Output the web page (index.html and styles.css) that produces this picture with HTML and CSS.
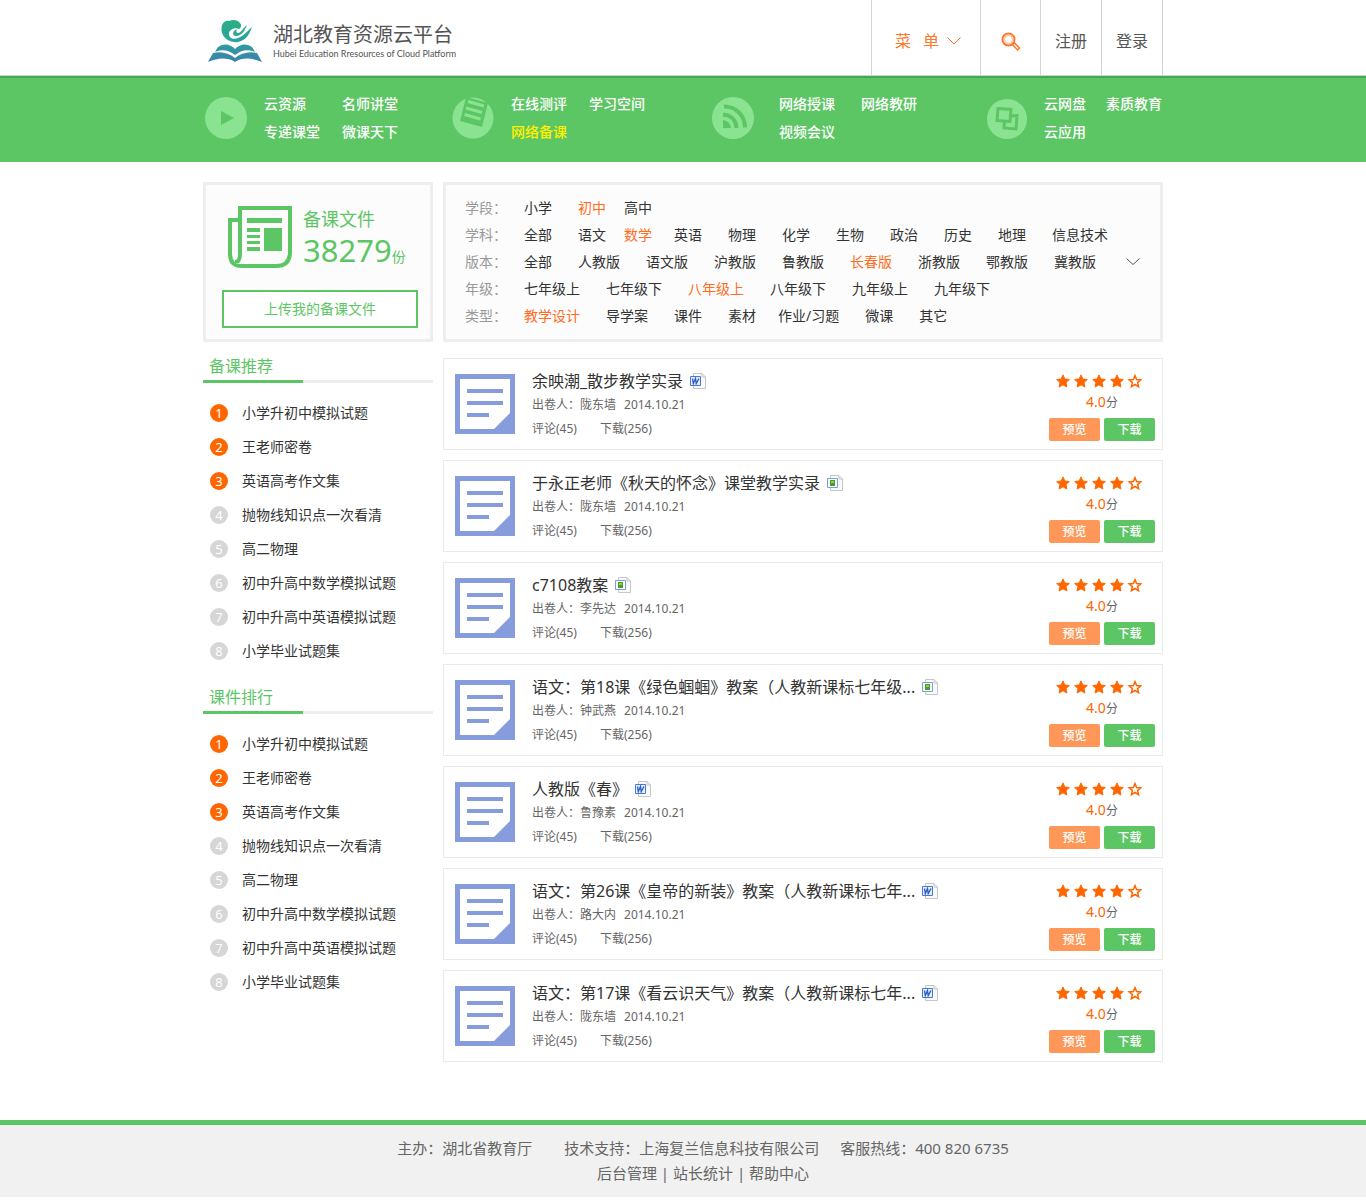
FILE: index.html
```html
<!DOCTYPE html>
<html lang="zh-CN">
<head>
<meta charset="utf-8">
<meta name="viewport" content="width=device-width, initial-scale=1">
<title>湖北教育资源云平台</title>
<link rel="stylesheet" href="styles.css">
</head>
<body>
<svg class="sprite" aria-hidden="true">
  <defs>
    <linearGradient id="logo-fill" x1="0" y1="0" x2="0" y2="44" gradientUnits="userSpaceOnUse">
      <stop offset="0" stop-color="#2bb183"/><stop offset=".5" stop-color="#2ba39b"/><stop offset="1" stop-color="#3f7fae"/>
    </linearGradient>
    <symbol id="doc" viewBox="0 0 60 60">
      <path fill="#869cdc" d="M0 0h60v60H0z"/>
      <path fill="#fff" d="M5 5h50v34L39 55H5z"/>
      <path fill="#869cdc" d="M12 15h36v4H12zM12 27h36v4H12zM12 39h22v4H12z"/>
    </symbol>
    <symbol id="word" viewBox="0 0 16 16">
      <path d="M3.500.5h8.500l3.500 3.500v11.500h-12z" fill="#fafafa" stroke="#c3c6cb"/>
      <path d="M12 .5V4h3.500" fill="none" stroke="#c3c6cb"/>
      <path d="M.5 3.500h10v9H.5z" fill="#e8f0fc" stroke="#4a78d8"/>
      <path d="M2.500 5.500l.8 5 2.200-5 .7 5 2.800-5" fill="none" stroke="#2f5fc4" stroke-width="1.400"/>
    </symbol>
    <symbol id="image" viewBox="0 0 16 16">
      <path d="M3.500.5h8.500l3.500 3.500v11.500h-12z" fill="#fafafa" stroke="#c3c6cb"/>
      <path d="M12 .5V4h3.500" fill="none" stroke="#c3c6cb"/>
      <path d="M.5 3.500h10v9H.5z" fill="#fff" stroke="#7d9fd4"/>
      <path d="M3 5h5v6H3z" fill="#4d9c2c"/><path d="M4 6h3v2H4z" fill="#8fcf50"/>
    </symbol>
    <symbol id="stars" viewBox="0 0 86 14">
      <g fill="#ff6600" stroke="#ff6600">
        <path id="star" stroke-width="1" stroke-linejoin="round" d="M7 .9l1.800 4.100 4.500.5-3.300 3 .9 4.500L7 10.800 3.100 13 4 8.500.7 5.500 5.200 5z"/>
        <use href="#star" x="18"/><use href="#star" x="36"/><use href="#star" x="54"/>
      </g>
      <path fill="none" stroke="#ff6600" stroke-width="1.500" d="M79 1.600l1.600 3.900 4.200.4-3.200 2.700 1 4.100L79 10.500l-3.600 2.200 1-4.100-3.200-2.700 4.200-.4z"/>
    </symbol>
  </defs>
</svg>

<header class="top">
  <div class="wrap top-row">
    <a class="logo" href="#">
      <svg width="54" height="44" viewBox="0 0 54 44" aria-hidden="true">
        <g fill="url(#logo-fill)">
          <path d="M22 22C16 20 13 14 13.500 9 14 4 17 1 21 2c4-2 9-1 11 2 2 2 1 5-1 6-5-2-10 1-10 5 0 4 4 6 9 4 6-2 9-7 14-11-2 6-5 13-14 15-3 .5-6 0-8-1z"/>
          <path d="M29 10c-5 2-5 7-1 7 6 0 9-6 11-11-4 3-6 8-9 8-2 0-2-2-1-4z"/>
          <path d="M10 28c6-4 12-3 17 2 5-5 11-6 17-2l3 5c-7-3-14-2-20 3-6-5-13-6-20-3z"/>
          <path d="M5 34l-5 9c10-4 19-5 27 0 8-5 17-4 27 0l-5-9c-8-2-16 0-22 5-6-5-14-7-22-5z"/>
        </g>
      </svg>
      <span class="logo-text">
        <strong>湖北教育资源云平台</strong>
        <small>Hubei Education Rresources of Cloud Platform</small>
      </span>
    </a>
    <div class="tools">
      <button class="tool menu" type="button"><span>菜&nbsp;&ensp;单</span>
        <svg width="14" height="8" viewBox="0 0 14 8" aria-hidden="true"><path d="M.5 .5L7 7l6.500-6.500" fill="none" stroke="currentColor"/></svg>
      </button>
      <button class="tool search" type="button" aria-label="搜索">
        <svg width="20" height="20" viewBox="0 0 20 20" aria-hidden="true" fill="none" stroke="currentColor"><circle cx="7.500" cy="7.500" r="6" stroke-width="2"/><circle cx="7.500" cy="7.500" r="4" stroke-width=".5"/><path d="M11.500 12.500l5 5.500 2-2-5-5z" stroke-width="1.500"/></svg>
      </button>
      <a class="tool" href="#">注册</a>
      <a class="tool" href="#">登录</a>
    </div>
  </div>
</header>

<nav class="nav">
  <div class="wrap nav-row">
    <div class="group">
      <svg width="42" height="42" viewBox="0 0 42 42" aria-hidden="true"><circle cx="21" cy="21" r="21" fill="#8ae391"/><path d="M16 14l13 7-13 7z" fill="#5dc664"/></svg>
      <div class="links"><a href="#">云资源</a><a href="#">名师讲堂</a><a href="#">专递课堂</a><a href="#">微课天下</a></div>
    </div>
    <div class="group">
      <svg width="42" height="42" viewBox="0 0 42 42" aria-hidden="true"><circle cx="21" cy="21" r="20.500" fill="#8ae391"/><path d="M14 0l22 6-6 24-22-6z" fill="#5dc664"/><path d="M16 4.500l16 4.500M14 11l16 4.500M12.500 17.500l16 4.500" stroke="#8ae391" stroke-width="3"/></svg>
      <div class="links"><a href="#">在线测评</a><a href="#">学习空间</a><a class="current" href="#">网络备课</a></div>
    </div>
    <div class="group broad">
      <svg width="42" height="42" viewBox="0 0 42 42" aria-hidden="true"><circle cx="21" cy="21" r="21" fill="#8ae391"/><path d="M11 23q7 1 8 8h-8z" fill="#5dc664"/><path d="M11 17.500C19 18 24 23 24.500 31M12 9.500c12 0 21 9 21 21" fill="none" stroke="#5dc664" stroke-width="4"/></svg>
      <div class="links"><a href="#">网络授课</a><a href="#">网络教研</a><a href="#">视频会议</a></div>
    </div>
    <div class="group">
      <svg width="40" height="42" viewBox="0 0 40 42" aria-hidden="true"><circle cx="20" cy="22" r="20" fill="#8ae391"/><g fill="none" stroke="#5dc664" stroke-width="3"><path d="M11 11.500l13 1-1 12-13-1z"/><path d="M22 19l8-.5-1 13.500-12-1 .5-7"/></g></svg>
      <div class="links"><a href="#">云网盘</a><a href="#">素质教育</a><a href="#">云应用</a></div>
    </div>
  </div>
</nav>

<main class="wrap page">
  <section class="upload">
    <div class="total">
      <svg width="64" height="62" viewBox="0 0 64 62" aria-hidden="true">
        <path d="M12 14H2v34q0 12 12 12h34q14 0 14-14V2H12v46q0 8-5 8" fill="none" stroke="#5dc664" stroke-width="4"/>
        <path d="M19 12h35v5H19zM19 22h13v4H19zM19 29h13v3H19zM19 35h13v3H19zM19 41h13v4H19zM36 22h18v23H36z" fill="#5dc664"/>
      </svg>
      <div>
        <div class="total-name">备课文件</div>
        <div class="total-count"><b>38279</b>份</div>
      </div>
    </div>
    <button class="upload-button" type="button">上传我的备课文件</button>
  </section>

  <section class="filters">
    <div class="filter"><span class="label">学段：</span><a href="#">小学</a><a class="on near" href="#">初中</a><a href="#">高中</a></div>
    <div class="filter"><span class="label">学科：</span><a href="#">全部</a><a class="near" href="#">语文</a><a class="on close" href="#">数学</a><a href="#">英语</a><a href="#">物理</a><a href="#">化学</a><a href="#">生物</a><a href="#">政治</a><a href="#">历史</a><a href="#">地理</a><a href="#">信息技术</a></div>
    <div class="filter"><span class="label">版本：</span><a href="#">全部</a><a href="#">人教版</a><a href="#">语文版</a><a href="#">沪教版</a><a href="#">鲁教版</a><a class="on" href="#">长春版</a><a href="#">浙教版</a><a href="#">鄂教版</a><a href="#">冀教版</a><button class="more" type="button" aria-label="更多版本"><svg width="14" height="8" viewBox="0 0 14 8" aria-hidden="true"><path d="M.5 .5L7 6.500 13.500.5" fill="none" stroke="#555"/></svg></button></div>
    <div class="filter"><span class="label">年级：</span><a href="#">七年级上</a><a href="#">七年级下</a><a class="on" href="#">八年级上</a><a href="#">八年级下</a><a href="#">九年级上</a><a href="#">九年级下</a></div>
    <div class="filter"><span class="label">类型：</span><a class="on" href="#">教学设计</a><a href="#">导学案</a><a href="#">课件</a><a class="close" href="#">素材</a><a href="#">作业/习题</a><a href="#">微课</a><a href="#">其它</a></div>
  </section>

  <aside class="side">
    <section class="rank">
      <h2>备课推荐</h2>
      <ol>
        <li><i>1</i><a href="#">小学升初中模拟试题</a></li>
        <li><i>2</i><a href="#">王老师密卷</a></li>
        <li><i>3</i><a href="#">英语高考作文集</a></li>
        <li><i>4</i><a href="#">抛物线知识点一次看清</a></li>
        <li><i>5</i><a href="#">高二物理</a></li>
        <li><i>6</i><a href="#">初中升高中数学模拟试题</a></li>
        <li><i>7</i><a href="#">初中升高中英语模拟试题</a></li>
        <li><i>8</i><a href="#">小学毕业试题集</a></li>
      </ol>
    </section>
    <section class="rank">
      <h2>课件排行</h2>
      <ol>
        <li><i>1</i><a href="#">小学升初中模拟试题</a></li>
        <li><i>2</i><a href="#">王老师密卷</a></li>
        <li><i>3</i><a href="#">英语高考作文集</a></li>
        <li><i>4</i><a href="#">抛物线知识点一次看清</a></li>
        <li><i>5</i><a href="#">高二物理</a></li>
        <li><i>6</i><a href="#">初中升高中数学模拟试题</a></li>
        <li><i>7</i><a href="#">初中升高中英语模拟试题</a></li>
        <li><i>8</i><a href="#">小学毕业试题集</a></li>
      </ol>
    </section>
  </aside>

  <section class="papers">
    <article class="paper">
      <svg class="doc" aria-hidden="true"><use href="#doc"/></svg>
      <div class="info">
        <h3><a href="#">余映潮_散步教学实录</a><svg class="type" aria-hidden="true"><use href="#word"/></svg></h3>
        <p><span>出卷人：陇东墙</span><time>2014.10.21</time></p>
        <p class="counts"><span>评论(45)</span><span>下载(256)</span></p>
      </div>
      <div class="rate">
        <svg class="stars" role="img" aria-label="四星"><use href="#stars"/></svg>
        <div class="score"><b>4.0</b>分</div>
        <div class="actions"><button class="preview" type="button">预览</button><button class="download" type="button">下载</button></div>
      </div>
    </article>
    <article class="paper">
      <svg class="doc" aria-hidden="true"><use href="#doc"/></svg>
      <div class="info">
        <h3><a href="#">于永正老师《秋天的怀念》课堂教学实录</a><svg class="type" aria-hidden="true"><use href="#image"/></svg></h3>
        <p><span>出卷人：陇东墙</span><time>2014.10.21</time></p>
        <p class="counts"><span>评论(45)</span><span>下载(256)</span></p>
      </div>
      <div class="rate">
        <svg class="stars" role="img" aria-label="四星"><use href="#stars"/></svg>
        <div class="score"><b>4.0</b>分</div>
        <div class="actions"><button class="preview" type="button">预览</button><button class="download" type="button">下载</button></div>
      </div>
    </article>
    <article class="paper">
      <svg class="doc" aria-hidden="true"><use href="#doc"/></svg>
      <div class="info">
        <h3><a href="#">c7108教案</a><svg class="type" aria-hidden="true"><use href="#image"/></svg></h3>
        <p><span>出卷人：李先达</span><time>2014.10.21</time></p>
        <p class="counts"><span>评论(45)</span><span>下载(256)</span></p>
      </div>
      <div class="rate">
        <svg class="stars" role="img" aria-label="四星"><use href="#stars"/></svg>
        <div class="score"><b>4.0</b>分</div>
        <div class="actions"><button class="preview" type="button">预览</button><button class="download" type="button">下载</button></div>
      </div>
    </article>
    <article class="paper">
      <svg class="doc" aria-hidden="true"><use href="#doc"/></svg>
      <div class="info">
        <h3><a href="#">语文：第18课《绿色蝈蝈》教案（人教新课标七年级...</a><svg class="type" aria-hidden="true"><use href="#image"/></svg></h3>
        <p><span>出卷人：钟武燕</span><time>2014.10.21</time></p>
        <p class="counts"><span>评论(45)</span><span>下载(256)</span></p>
      </div>
      <div class="rate">
        <svg class="stars" role="img" aria-label="四星"><use href="#stars"/></svg>
        <div class="score"><b>4.0</b>分</div>
        <div class="actions"><button class="preview" type="button">预览</button><button class="download" type="button">下载</button></div>
      </div>
    </article>
    <article class="paper">
      <svg class="doc" aria-hidden="true"><use href="#doc"/></svg>
      <div class="info">
        <h3><a href="#">人教版《春》</a><svg class="type" aria-hidden="true"><use href="#word"/></svg></h3>
        <p><span>出卷人：鲁豫素</span><time>2014.10.21</time></p>
        <p class="counts"><span>评论(45)</span><span>下载(256)</span></p>
      </div>
      <div class="rate">
        <svg class="stars" role="img" aria-label="四星"><use href="#stars"/></svg>
        <div class="score"><b>4.0</b>分</div>
        <div class="actions"><button class="preview" type="button">预览</button><button class="download" type="button">下载</button></div>
      </div>
    </article>
    <article class="paper">
      <svg class="doc" aria-hidden="true"><use href="#doc"/></svg>
      <div class="info">
        <h3><a href="#">语文：第26课《皇帝的新装》教案（人教新课标七年...</a><svg class="type" aria-hidden="true"><use href="#word"/></svg></h3>
        <p><span>出卷人：路大内</span><time>2014.10.21</time></p>
        <p class="counts"><span>评论(45)</span><span>下载(256)</span></p>
      </div>
      <div class="rate">
        <svg class="stars" role="img" aria-label="四星"><use href="#stars"/></svg>
        <div class="score"><b>4.0</b>分</div>
        <div class="actions"><button class="preview" type="button">预览</button><button class="download" type="button">下载</button></div>
      </div>
    </article>
    <article class="paper">
      <svg class="doc" aria-hidden="true"><use href="#doc"/></svg>
      <div class="info">
        <h3><a href="#">语文：第17课《看云识天气》教案（人教新课标七年...</a><svg class="type" aria-hidden="true"><use href="#word"/></svg></h3>
        <p><span>出卷人：陇东墙</span><time>2014.10.21</time></p>
        <p class="counts"><span>评论(45)</span><span>下载(256)</span></p>
      </div>
      <div class="rate">
        <svg class="stars" role="img" aria-label="四星"><use href="#stars"/></svg>
        <div class="score"><b>4.0</b>分</div>
        <div class="actions"><button class="preview" type="button">预览</button><button class="download" type="button">下载</button></div>
      </div>
    </article>
  </section>
</main>

<footer class="footer">
  <div class="owners"><span>主办：湖北省教育厅</span><span class="support">技术支持：上海复兰信息科技有限公司</span><span>客服热线：400 820 6735</span></div>
  <div><a href="#">后台管理</a> | <a href="#">站长统计</a> | <a href="#">帮助中心</a></div>
</footer>
</body>
</html>
```
FILE: styles.css
```css
* { box-sizing: border-box; }

body {
  margin: 0;
  background: #fff;
  color: #333;
  font: 14px/24px "Noto Sans", "Noto Sans CJK SC", sans-serif;
}

a { color: inherit; text-decoration: none; }
button { font: inherit; margin: 0; padding: 0; border: 0; background: none; cursor: pointer; }
h2, h3, p, ol { margin: 0; padding: 0; font-weight: 400; }
b, strong, i { font-weight: 400; font-style: normal; }
svg { display: block; flex: none; }
.sprite { position: absolute; width: 0; height: 0; }
.wrap { max-width: 960px; margin: 0 auto; }

/* Header */
.top { border-bottom: 1px solid #c9d3c9; }
.top-row { display: flex; justify-content: space-between; height: 75px; }
.logo { display: flex; align-items: center; gap: 11px; padding: 6px 0 0 5px; }
.logo-text { display: flex; flex-direction: column; padding-top: 2px; color: #555; }
.logo-text strong { font-size: 20px; line-height: 24px; }
.logo-text small { font: 9px/14px Lato, sans-serif; }
.tools { display: flex; border-right: 1px solid #d4d4d4; }
.tool {
  display: flex;
  align-items: center;
  justify-content: center;
  width: 61px;
  padding-top: 7px;
  border-left: 1px solid #d4d4d4;
  color: #555;
  font-size: 16px;
}
.menu { width: 109px; gap: 8px; padding-left: 4px; color: #ff7728; }
.search { width: 60px; padding-top: 9px; color: #ff7728; }

/* Green navigation */
.nav { border-top: 2px solid #43a957; background: #5dc664; color: #fff; }
.nav-row { display: grid; grid-template-columns: 247fr 260fr 275fr 176fr; padding: 12px 0 16px 2px; }
.group { display: flex; align-items: center; gap: 17px; }
.links { display: grid; grid-template-columns: auto auto; column-gap: 22px; line-height: 28px; white-space: nowrap; font-weight: 500; }
.broad { gap: 25px; }
.broad .links { column-gap: 26px; }
.group:last-child .links { column-gap: 20px; }
.current { color: #ffef00; }

/* Page grid */
.page {
  display: grid;
  grid-template-columns: 230px minmax(0, 1fr);
  column-gap: 10px;
  row-gap: 16px;
  padding: 20px 0 58px;
}

.upload, .filters { border: 3px solid #eee; background: #fcfcfc; }
.upload { padding: 21px 12px 11px 16px; color: #5dc664; }
.total { display: flex; gap: 11px; padding-left: 6px; }
.total-name { font-size: 18px; line-height: 26px; }
.total-count { line-height: 38px; white-space: nowrap; }
.total-count b { font-size: 31px; line-height: 36px; }
.upload-button { width: 100%; height: 38px; margin-top: 14px; border: 2px solid #5dc664; background: #fff; color: #5dc664; }

.filters { padding: 9px 19px; }
.filter { display: flex; height: 27px; line-height: 27px; white-space: nowrap; }
.filter .label { flex: none; width: 59px; color: #999; }
.filter a { margin-right: 26px; }
.filter .near { margin-right: 18px; }
.filter .close { margin-right: 22px; }
.filter .on { color: #ff6c24; }
.more { padding: 0 4px; }

/* Ranking lists */
.side { display: flex; flex-direction: column; gap: 13px; margin-top: -8px; }
.rank h2 {
  padding: 2px 0 0 6px;
  border-bottom: 3px solid;
  border-image: linear-gradient(90deg, #5dc664 100px, #eee 100px) 3;
  color: #5dc664;
  font-size: 16px;
  line-height: 28px;
}
.rank ol { padding: 13px 0 0 7px; list-style: none; }
.rank li { display: flex; align-items: center; gap: 14px; height: 34px; }
.rank i {
  width: 18px;
  height: 18px;
  border-radius: 50%;
  background: #d6d6d6;
  color: #fff;
  font-size: 13px;
  line-height: 18px;
  text-align: center;
}
.rank li:nth-child(-n+3) i { background: #ff6600; }

/* Paper list */
.papers { display: flex; flex-direction: column; gap: 10px; }
.paper { display: flex; gap: 17px; padding: 10px 7px 8px 11px; border: 1px solid #eaeaea; }
.doc { width: 60px; height: 60px; margin-top: 5px; }
.info { flex: 1; min-width: 0; color: #666; font-size: 12px; }
.info h3 { display: flex; align-items: center; gap: 7px; color: #333; font-size: 16px; }
.type { width: 16px; height: 16px; }
.info p { display: flex; gap: 8px; }
.info .counts { gap: 23px; }
.rate { width: 106px; text-align: center; }
.stars { width: 86px; height: 14px; margin: 5px 0 5px 7px; }
.score { height: 18px; color: #666; font-size: 12px; line-height: 18px; }
.score b { color: #ff6600; font-size: 14px; }
.actions { display: flex; gap: 4px; margin-top: 7px; }
.actions button { flex: 1; height: 23px; border-radius: 2px; color: #fff; font-size: 12px; font-weight: 500; line-height: 23px; }
.preview { background: #fe9757; }
.download { background: #5dc664; }

/* Footer */
.footer {
  padding: 11px 0 11px 40px;
  border-top: 5px solid #5dc664;
  background: #f1f1f1;
  color: #666;
  font-size: 15px;
  line-height: 25px;
  text-align: center;
}
.owners { display: flex; justify-content: center; }
.support { margin: 0 21px 0 32px; }
```
